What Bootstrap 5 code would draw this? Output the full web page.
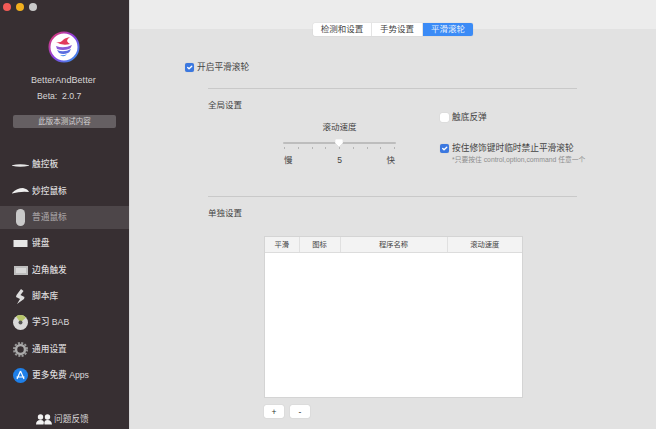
<!DOCTYPE html>
<html lang="zh-CN">
<head>
    <meta charset="UTF-8">
    <meta name="viewport" content="width=device-width, initial-scale=1.0">
    <title>BetterAndBetter</title>
    <link href="https://cdn.jsdelivr.net/npm/bootstrap@5.3.0/dist/css/bootstrap.min.css" rel="stylesheet">
    <style>
        html, body { height: 100%; }
        body {
            width: 656px;
            height: 429px;
            overflow: hidden;
            background: #e2e2e2;
            font-family: "Liberation Sans", "Noto Sans CJK SC", sans-serif;
            font-size: 8.7px;
            color: #444;
        }
        .app-shell { height: 429px; }
        .side-panel {
            width: 130px;
            flex: none;
            background: #372f32;
            border-right: 1px solid #d8d8d8;
            color: #d8d6d6;
            position: relative;
        }
        .traffic { padding: 3px 0 0 3px; gap: 5px; height: 30px; }
        .traffic span { width: 8px; height: 8px; border-radius: 50%; display: block; }
        .app-logo { margin: 1px 0 0 48px; width: 32px; height: 32px; display: block; }
        .app-name { margin-top: 11px; padding-left: 31px; font-size: 9px; line-height: 12px; letter-spacing: .05px; }
        .app-ver { margin-top: 4px; padding-left: 37px; font-size: 8.7px; line-height: 12px; }
        .beta-btn {
            margin: 13px 0 0 13px;
            width: 103px;
            height: 13px;
            background: #655f62;
            border-radius: 2px;
            text-align: center;
            font-size: 7.5px;
            line-height: 13px;
            color: #d4d2d3;
        }
        .side-menu { margin-top: 25.5px; gap: 3.3px; }
        .side-item {
            height: 23px;
            padding-left: 12px;
            gap: 3px;
            font-size: 8.7px;
            font-weight: 500;
            color: #dcdadb;
        }
        .side-item.on { background: #4d4649; color: #a09c9e; }
        .side-ico { width: 17px; height: 17px; flex: none; display: block; }
        .side-foot {
            position: absolute;
            left: 36px;
            top: 412px;
            gap: 2px;
            font-size: 8.7px;
            line-height: 14px;
        }
        .main-pane { flex: 1; min-width: 0; }
        .top-strip { height: 29px; background: #ececec; }
        .seg-tabs {
            position: absolute;
            left: 313px;
            top: 23px;
            height: 13px;
            width: 160px;
            border-radius: 2px;
            box-shadow: 0 0 1px rgba(0,0,0,.25);
        }
        .seg-tabs a {
            display: block;
            background: #fff;
            color: #444;
            text-align: center;
            text-decoration: none;
            font-size: 8.5px;
            line-height: 13px;
            border-right: 1px solid #e4e4e4;
        }
        .seg-tabs a:nth-child(1) { width: 59px; border-radius: 2px 0 0 2px; }
        .seg-tabs a:nth-child(2) { width: 51px; }
        .seg-tabs a:nth-child(3) { width: 50px; background: #3b8bf6; color: #e4effd; border: 0; border-radius: 0 2px 2px 0; }
        .body-pane { padding: 33px 0 0 55px; }
        .tick-row { gap: 3px; line-height: 10px; font-size: 8.7px; color: #444; }
        .form-check-input.tick-box {
            width: 9px;
            height: 9px;
            flex: none;
            margin: 0;
            border-radius: 2px;
            background-color: #fff;
            border: 0;
            box-shadow: 0 0 1px rgba(0,0,0,.2);
        }
        .form-check-input.tick-box:checked { background-color: #3b78e0; }
        .pane-inner { margin-left: 23px; width: 369px; }
        .pane-rule { margin: 0; border-top: 1px solid #c9c9c9; opacity: 1; }
        .sect-title { font-size: 8.5px; line-height: 12px; color: #444; }
        .global-row { height: 85px; }
        .slider-col { width: 113px; margin: 10px 0 0 75px; flex: none; text-align: center; }
        .slider-cap { font-size: 8.5px; line-height: 12px; }
        .slider-track { height: 2px; background: #bdbdbd; margin: 9px 0 0 0; position: relative; border-radius: 1px; }
        .slider-knob { position: absolute; left: 52px; top: -3px; display: block; }
        .slider-ticks { padding: 0 1px; margin-top: 3px; height: 3px; }
        .slider-ticks i { width: 1px; height: 2px; background: #b5b5b5; display: block; }
        .slider-scale { margin-top: 4px; font-size: 8.5px; line-height: 12px; padding: 0 1px; }
        .opts-col { margin-left: 44px; flex: none; }
        .opt-a { margin-top: 1px; }
        .opt-b { margin-top: 21px; }
        .opt-hint { padding-left: 12px; margin-top: 2px; font-size: 6.8px; line-height: 9px; color: #8e8e8e; white-space: nowrap; }
        .table-zone { margin: 17px 0 0 56px; width: 259px; }
        .app-table { height: 162px; background: #fff; border: 1px solid #d4d4d4; }
        .app-table .table { margin: 0; --bs-table-bg: transparent; table-layout: fixed; font-size: 7.3px; color: #444; }
        .app-table th {
            font-weight: 400;
            height: 15px;
            line-height: 14px;
            padding: 0;
            text-align: center;
            background: #f3f3f3;
            border-bottom: 1px solid #dcdcdc;
            border-right: 1px solid #e0e0e0;
        }
        .app-table th:last-child { border-right: 0; }
        .mini-btns { margin-top: 7px; gap: 6px; }
        .mini-btn {
            width: 20px;
            height: 13px;
            padding: 0;
            font-size: 8.5px;
            line-height: 12px;
            color: #333;
            background: #fff;
            border: 0;
            border-radius: 2px;
            box-shadow: 0 0 1px rgba(0,0,0,.25);
        }
    </style>
</head>
<body>
<div class="app-shell d-flex">
    <div class="side-panel">
        <div class="traffic d-flex">
            <span style="background:#f25a56"></span>
            <span style="background:#f2b01e"></span>
            <span style="background:#c8c8c8"></span>
        </div>
        <svg class="app-logo" viewBox="0 0 32 32">
            <defs><linearGradient id="rim" x1="0" y1="0" x2="1" y2="1"><stop offset="0" stop-color="#e83a6a"/><stop offset=".5" stop-color="#8a3fe0"/><stop offset="1" stop-color="#2f9df0"/></linearGradient></defs>
            <circle cx="16" cy="16" r="14.5" fill="#fff" stroke="url(#rim)" stroke-width="2"/>
            <path d="M8 15q8 3 16-1q-1 3-3 4q-6 2-12 0z" fill="#8a5bd6"/>
            <path d="M9 19q7 3 14-1q-1 3-3 4q-5 2-9 0z" fill="#5c6ee0"/>
            <path d="M12 24q4 1 7-1q-3 4-7 1z" fill="#3b86e8"/>
            <path d="M8 11q4 1 6-1q2-3 8-4q-3 2-3 4q1 2 3 3q-8 2-14-2z" fill="#e23b5c"/>
        </svg>
        <div class="app-name">BetterAndBetter</div>
        <div class="app-ver">Beta:&nbsp;&nbsp;2.0.7</div>
        <div class="beta-btn">此版本测试内容</div>
        <div class="side-menu d-flex flex-column">
            <div class="side-item d-flex align-items-center">
                <svg class="side-ico" viewBox="0 0 17 17"><path d="M-1 8.5Q8 6 18 8.5Q8 11 -1 8.5z" fill="#e8e8e8"/></svg>触控板
            </div>
            <div class="side-item d-flex align-items-center">
                <svg class="side-ico" viewBox="0 0 17 17"><path d="M0 10Q5 5 11 5Q16 6 17 9Q9 8 0 10.5z" fill="#eee"/></svg>妙控鼠标
            </div>
            <div class="side-item on d-flex align-items-center">
                <svg class="side-ico" viewBox="0 0 17 17"><rect x="4" y="0" width="9" height="17" rx="4.5" fill="#c9c9c9"/></svg>普通鼠标
            </div>
            <div class="side-item d-flex align-items-center">
                <svg class="side-ico" viewBox="0 0 17 17"><rect x="1.5" y="5" width="14" height="7" fill="#e6e6e6"/></svg>键盘
            </div>
            <div class="side-item d-flex align-items-center">
                <svg class="side-ico" viewBox="0 0 17 17"><rect x="2" y="4" width="14" height="9" fill="#bdbdbd"/><rect x="4" y="6" width="10" height="5" fill="#d8d8d8"/></svg>边角触发
            </div>
            <div class="side-item d-flex align-items-center">
                <svg class="side-ico" viewBox="0 0 17 17"><path d="M9 1L4.5 7l-.5 2 4 2-3 5 7-5 .5-2-4-2 3-4z" fill="#ddd"/></svg>脚本库
            </div>
            <div class="side-item d-flex align-items-center">
                <svg class="side-ico" viewBox="0 0 17 17"><circle cx="8.5" cy="8.5" r="7.5" fill="#d9d9d9"/><path d="M8.5 8.5L4 2.5A7.5 7.5 0 0 1 14 3.5z" fill="#b7c56a"/><circle cx="8.5" cy="8.5" r="2" fill="#555"/></svg>学习 BAB
            </div>
            <div class="side-item d-flex align-items-center">
                <svg class="side-ico" viewBox="0 0 17 17"><circle cx="8.5" cy="8.5" r="4.5" fill="none" stroke="#aaa" stroke-width="2.5"/><circle cx="8.5" cy="8.5" r="6.5" fill="none" stroke="#999" stroke-width="2" stroke-dasharray="2 1.4"/></svg>通用设置
            </div>
            <div class="side-item d-flex align-items-center">
                <svg class="side-ico" viewBox="0 0 17 17"><circle cx="8.5" cy="8.5" r="7.5" fill="#1e7fe8"/><path d="M8.5 4L5 12M8.5 4L12 12M4.5 10H12.5" stroke="#fff" stroke-width="1.2" fill="none"/></svg>更多免费 Apps
            </div>
        </div>
        <div class="side-foot d-flex align-items-center">
            <svg width="16" height="11" viewBox="0 0 16 11"><circle cx="4.5" cy="3" r="2.7" fill="#f2f2f2"/><circle cx="11.5" cy="3" r="2.7" fill="#f2f2f2"/><path d="M0 10.5q0-4.5 4.5-4.5t3 4.5zM8.5 10.5q-1-4.5 3-4.5t4.5 4.5z" fill="#f2f2f2"/></svg>
            问题反馈
        </div>
    </div>
    <div class="main-pane">
        <div class="top-strip"></div>
        <div class="seg-tabs d-flex">
            <a href="#">检测和设置</a>
            <a href="#">手势设置</a>
            <a href="#">平滑滚轮</a>
        </div>
        <div class="body-pane">
            <label class="tick-row d-flex align-items-center">
                <input class="form-check-input tick-box" type="checkbox" checked>开启平滑滚轮
            </label>
            <div class="pane-inner">
                <hr class="pane-rule" style="margin-top:16px">
                <div class="sect-title" style="margin-top:10px">全局设置</div>
                <div class="global-row d-flex">
                    <div class="slider-col">
                        <div class="slider-cap">滚动速度</div>
                        <div class="slider-track">
                            <svg class="slider-knob" width="8" height="8" viewBox="0 0 8 8"><path d="M1 0h6q1 0 1 1v3L4 8 0 4V1q0-1 1-1z" fill="#fff" stroke="#ccc" stroke-width=".4"/></svg>
                        </div>
                        <div class="slider-ticks d-flex justify-content-between">
                            <i></i><i></i><i></i><i></i><i></i><i></i><i></i><i></i><i></i>
                        </div>
                        <div class="slider-scale d-flex justify-content-between"><span>慢</span><span>5</span><span>快</span></div>
                    </div>
                    <div class="opts-col">
                        <label class="tick-row opt-a d-flex align-items-center">
                            <input class="form-check-input tick-box" type="checkbox">触底反弹
                        </label>
                        <label class="tick-row opt-b d-flex align-items-center">
                            <input class="form-check-input tick-box" type="checkbox" checked>按住修饰键时临时禁止平滑滚轮
                        </label>
                        <div class="opt-hint">*只要按住 control,option,command 任意一个</div>
                    </div>
                </div>
                <hr class="pane-rule">
                <div class="sect-title" style="margin-top:10px">单独设置</div>
                <div class="table-zone">
                    <div class="app-table">
                        <table class="table table-borderless">
                            <thead>
                                <tr>
                                    <th style="width:34px">平滑</th>
                                    <th style="width:41px">图标</th>
                                    <th style="width:107px">程序名称</th>
                                    <th>滚动速度</th>
                                </tr>
                            </thead>
                            <tbody></tbody>
                        </table>
                    </div>
                    <div class="mini-btns d-flex">
                        <button class="btn mini-btn" type="button">+</button>
                        <button class="btn mini-btn" type="button">-</button>
                    </div>
                </div>
            </div>
        </div>
    </div>
</div>
<script src="https://cdn.jsdelivr.net/npm/bootstrap@5.3.0/dist/js/bootstrap.bundle.min.js"></script>
</body>
</html>
